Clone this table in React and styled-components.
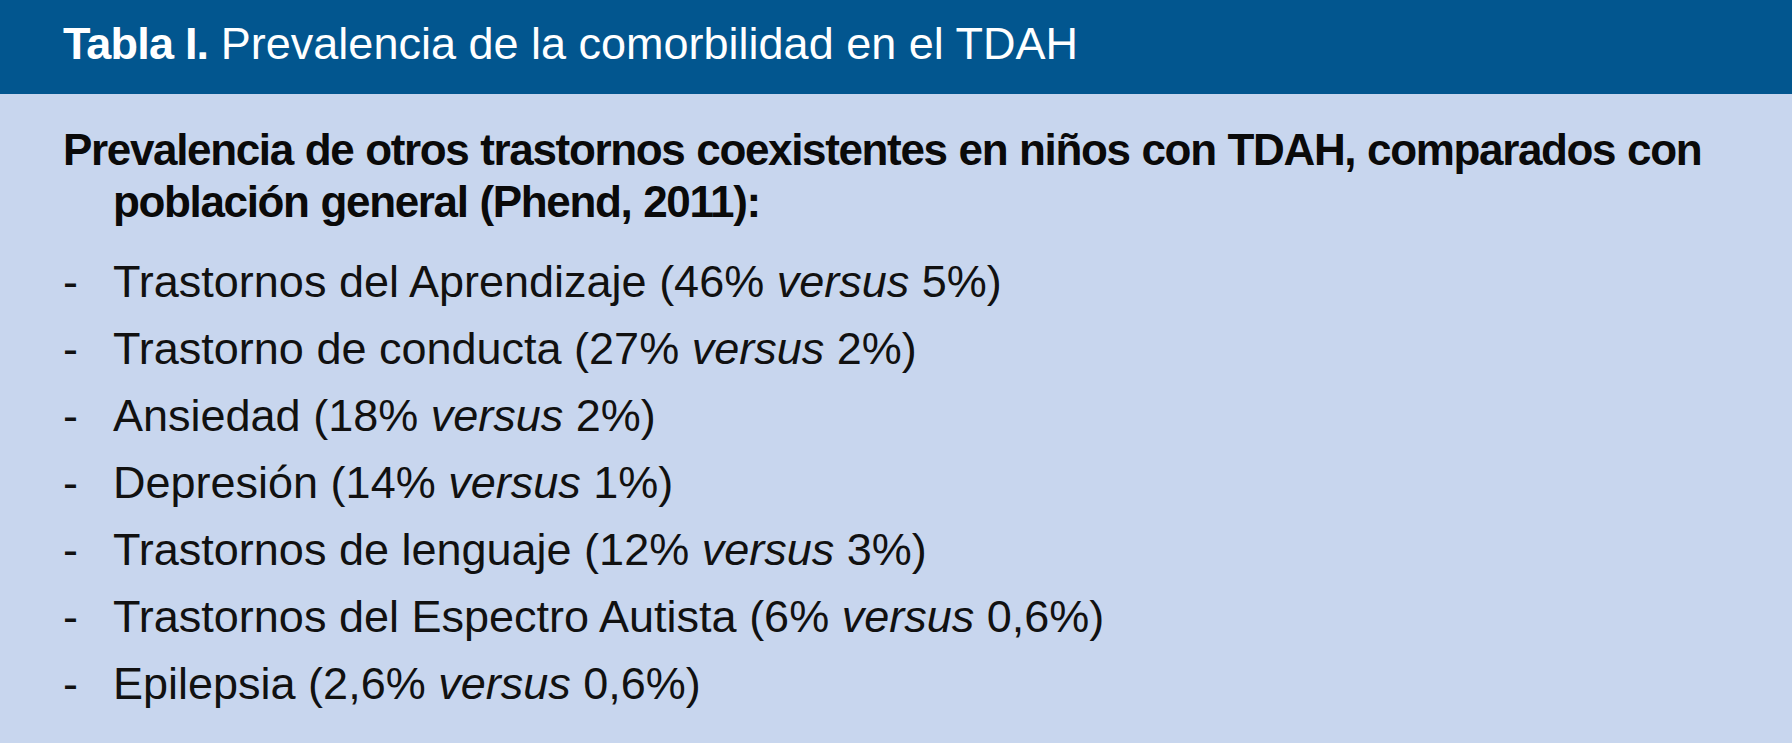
import React from "react";
import styled, { createGlobalStyle } from "styled-components";

const GlobalStyle = createGlobalStyle`
  html, body {
    margin: 0;
    padding: 0;
    background: #c8d6ee;
  }
  body {
    font-family: "Liberation Sans", Arial, sans-serif;
    -webkit-font-smoothing: antialiased;
  }
`;

const Page = styled.div`
  width: 1792px;
  min-height: 743px;
  background: #c8d6ee;
  color: #111;
  font-family: "Liberation Sans", Arial, sans-serif;
  font-size: 45px;
`;

const Header = styled.header`
  height: 94px;
  box-sizing: border-box;
  background: #02568f;
  color: #ffffff;
  padding: 18px 63px 0;
  line-height: 52px;
`;

const Title = styled.h1`
  margin: 0;
  font-size: 45px;
  font-weight: 400;
  line-height: 52px;
  white-space: nowrap;
`;

const TitleLabel = styled.strong`
  font-weight: 700;
  letter-spacing: -0.8px;
`;

const Body = styled.section`
  padding: 30px 63px 0;
`;

const Heading = styled.h2`
  margin: 0 0 20px;
  padding-left: 50px;
  text-indent: -50px;
  font-size: 44px;
  font-weight: 700;
  letter-spacing: -1.35px;
  word-spacing: 1px;
  line-height: 52px;
  color: #0a0a0a;
  white-space: nowrap;
`;

const List = styled.ul`
  list-style: none;
  margin: 0;
  padding: 0;
`;

const Item = styled.li`
  display: flex;
  line-height: 67px;
  font-size: 45px;
  white-space: nowrap;
`;

const Dash = styled.span`
  width: 50px;
  flex: none;
`;

const items = [
  ["Trastornos del Aprendizaje (46% ", "5%)"],
  ["Trastorno de conducta (27% ", "2%)"],
  ["Ansiedad (18% ", "2%)"],
  ["Depresión (14% ", "1%)"],
  ["Trastornos de lenguaje (12% ", "3%)"],
  ["Trastornos del Espectro Autista (6% ", "0,6%)"],
  ["Epilepsia (2,6% ", "0,6%)"],
];

export default function App() {
  return (
    <>
      <GlobalStyle />
      <Page>
        <Header>
          <Title>
            <TitleLabel>Tabla I.</TitleLabel> Prevalencia de la comorbilidad en el TDAH
          </Title>
        </Header>
        <Body>
          <Heading>
            Prevalencia de otros trastornos coexistentes en niños con TDAH, comparados con
            <br />
            población general (Phend, 2011):
          </Heading>
          <List>
            {items.map(([before, after]) => (
              <Item key={before}>
                <Dash>-</Dash>
                <span>
                  {before}
                  <em>versus</em> {after}
                </span>
              </Item>
            ))}
          </List>
        </Body>
      </Page>
    </>
  );
}
